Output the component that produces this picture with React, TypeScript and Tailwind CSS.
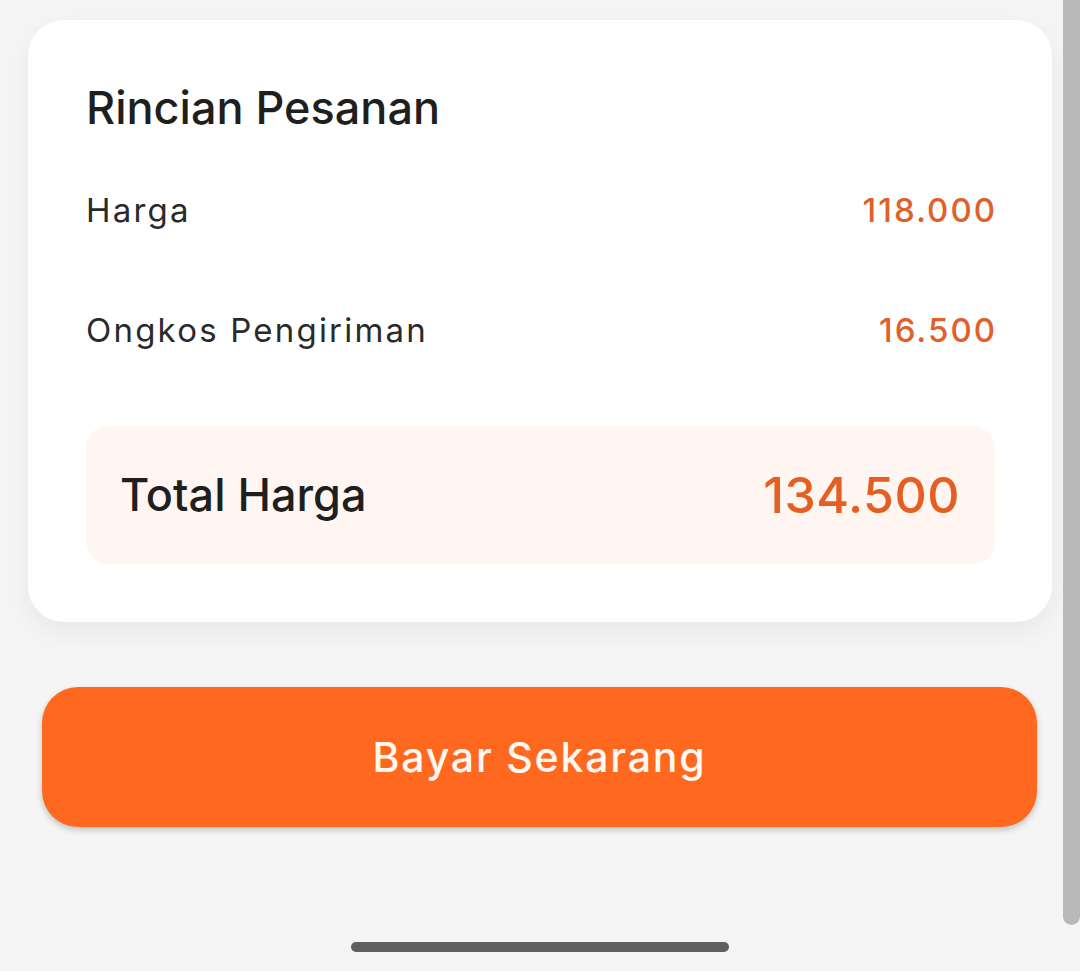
import React from 'react';

interface Row {
  label: string;
  value: string;
}

const rows: Row[] = [
  { label: 'Harga', value: '118.000' },
  { label: 'Ongkos Pengiriman', value: '16.500' },
];

export default function App() {
  return (
    <div
      className="relative min-h-[971px] w-[1080px] overflow-hidden bg-[#f5f5f5]"
      style={{ fontFamily: 'Inter, "Noto Sans", sans-serif' }}
    >
      {/* Order details card */}
      <div className="ml-[28px] mt-[20px] w-[1024px] rounded-[36px] bg-white pl-[58px] pr-[55px] pt-[62px] pb-[58px] shadow-[0_10px_28px_rgba(0,0,0,0.06)]">
        <h2 className="text-[45px] leading-[52px] font-medium text-[#1f1f1f]">Rincian Pesanan</h2>

        <div className="mt-[56px] flex flex-col gap-[80px]">
          {rows.map((row) => (
            <div key={row.label} className="flex items-center justify-between">
              <span className="text-[33px] leading-[40px] tracking-[2.2px] text-[#2a2a2a]">{row.label}</span>
              <span className="text-[33px] leading-[40px] tracking-[2px] font-medium text-[#e0602a]">{row.value}</span>
            </div>
          ))}
        </div>

        {/* Total */}
        <div className="mr-[2px] mt-[76px] flex h-[138px] items-center justify-between rounded-[22px] bg-[#fff6f2] pl-[34px] pr-[35px]">
          <span className="text-[45px] leading-[56px] font-medium text-[#1f1f1f]">Total Harga</span>
          <span className="text-[50px] leading-[60px] tracking-[0.5px] font-medium text-[#e55e22]">134.500</span>
        </div>
      </div>

      {/* Pay button */}
      <button className="ml-[42px] mt-[65px] flex h-[140px] w-[995px] items-center justify-center rounded-[36px] bg-[#ff691f] shadow-[0_3px_6px_rgba(0,0,0,0.22)]">
        <span className="text-[41px] leading-[50px] tracking-[1.8px] font-medium text-[#fff8f2]">Bayar Sekarang</span>
      </button>

      {/* Home indicator */}
      <div className="mt-[115px] flex justify-center">
        <div className="h-[10px] w-[378px] rounded-full bg-[#5f5f5f]" />
      </div>

      {/* Scrollbar */}
      <div className="absolute right-0 top-0 h-[925px] w-[17px] rounded-b-full bg-[#b9b9b9]" />
    </div>
  );
}
